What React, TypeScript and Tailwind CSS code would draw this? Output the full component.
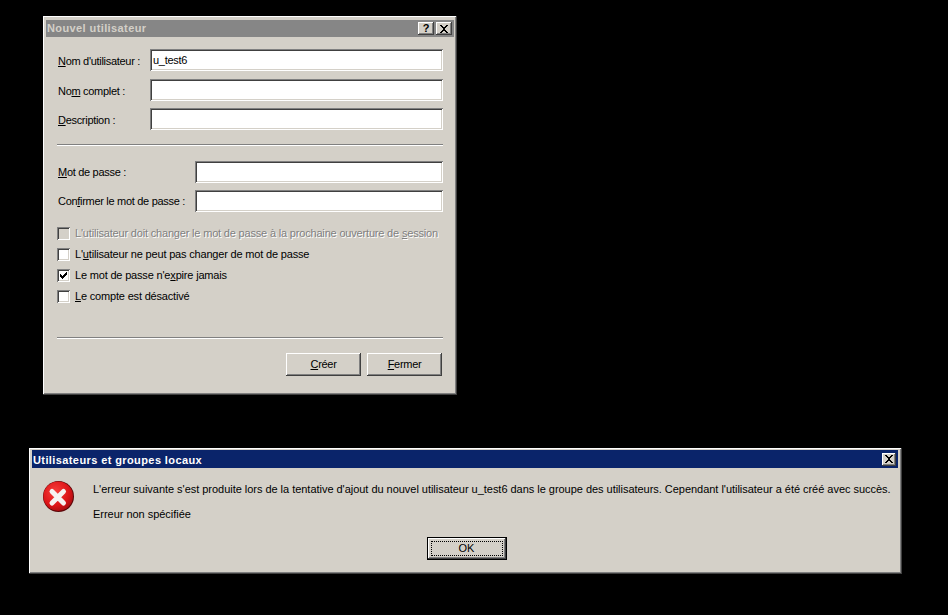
const raised = 'shadow-[inset_-1px_-1px_#404040,inset_1px_1px_#ffffff,inset_-2px_-2px_#808080,inset_2px_2px_#d4d0c8]';
const sunken = 'shadow-[inset_1px_1px_#808080,inset_-1px_-1px_#ffffff,inset_2px_2px_#404040,inset_-2px_-2px_#d4d0c8]';

function TitleButton({ children, className = '' }: { children: React.ReactNode; className?: string }) {
  return (
    <div className={`flex items-center justify-center bg-[#d4d0c8] ${raised} ${className}`}>
      {children}
    </div>
  );
}

function CloseGlyph() {
  return (
    <svg width="10" height="8" viewBox="0 0 10 8" shapeRendering="crispEdges">
      <path d="M1 0h2v1h1v1h2V1h1V0h2v1H8v1H7v1H6v2h1v1h1v1h1v1H7V7H6V6H4v1H3v1H1V7h1V6h1V5h1V3H3V2H2V1H1z" fill="#000" />
    </svg>
  );
}

function Field({ label, width, className = '', labelClass = 'pt-[2px]', value = '' }: { label: React.ReactNode; width: string; className?: string; labelClass?: string; value?: string }) {
  return (
    <div className={`flex items-center justify-between ${className}`}>
      <span className={`pl-[1px] text-[11px] tracking-[-0.3px] text-black ${labelClass}`}>{label}</span>
      <div className={`flex h-[22px] items-center bg-white pl-[3px] text-[11px] tracking-[-0.3px] text-black ${sunken} ${width}`}>{value}</div>
    </div>
  );
}

function Check({ label, checked = false, disabled = false }: { label: React.ReactNode; checked?: boolean; disabled?: boolean }) {
  return (
    <div className="flex h-[13px] items-center gap-[5px]">
      <div className={`flex h-[13px] w-[13px] items-center justify-center ${disabled ? 'bg-[#d4d0c8]' : 'bg-white'} ${sunken}`}>
        {checked && (
          <svg width="7" height="7" viewBox="0 0 7 7" shapeRendering="crispEdges">
            <path d="M6 0h1v3H6v1H5v1H4v1H3v1H2V6H1V5H0V2h1v1h1v1h1V3h1V2h1V1h1z" fill="#000" />
          </svg>
        )}
      </div>
      <span className={`whitespace-nowrap text-[11px] tracking-[-0.18px] ${disabled ? 'text-[#808080] [text-shadow:1px_1px_#ffffff]' : 'text-black'}`}>{label}</span>
    </div>
  );
}

function Separator({ className = '' }: { className?: string }) {
  return <div className={`h-[2px] border-t border-b border-t-[#808080] border-b-white ${className}`} />;
}

function DialogButton({ children }: { children: React.ReactNode }) {
  return (
    <div className={`flex h-[23px] w-[75px] items-center justify-center bg-[#d4d0c8] text-[11px] tracking-[-0.3px] text-black ${raised}`}>
      {children}
    </div>
  );
}

function ErrorIcon() {
  return (
    <svg width="31" height="31" viewBox="0 0 31 31" className="shrink-0">
      <defs>
        <radialGradient id="err" cx="40%" cy="35%" r="72%">
          <stop offset="0%" stopColor="#f8403c" />
          <stop offset="65%" stopColor="#dc1418" />
          <stop offset="100%" stopColor="#a00c10" />
        </radialGradient>
      </defs>
      <circle cx="15.5" cy="15.5" r="15.5" fill="#5a0608" />
      <circle cx="15.2" cy="15.2" r="14.8" fill="url(#err)" />
      <path d="M9 10.5 L20.5 22 M20.5 10.5 L9 22" stroke="#f6f2f2" strokeWidth="5" strokeLinecap="round" />
    </svg>
  );
}

export default function App() {
  return (
    <div className="flex h-[615px] w-[948px] flex-col overflow-hidden bg-black font-['Liberation_Sans',sans-serif]">
      {/* Nouvel utilisateur */}
      <div className={`ml-[43px] mt-[16px] h-[379px] w-[414px] shrink-0 bg-[#d4d0c8] px-[3px] pt-[4px] ${raised}`}>
        <div className="flex h-[17px] items-center justify-between bg-[#868686] pl-[1px] pr-[2px]">
          <span className="text-[11px] font-bold tracking-[0.4px] text-[#d4d0c8]">Nouvel utilisateur</span>
          <div className="flex gap-[2px]">
            <TitleButton className="h-[13px] w-[16px]">
              <span className="text-[11px] font-bold leading-none text-black">?</span>
            </TitleButton>
            <TitleButton className="h-[13px] w-[16px]">
              <CloseGlyph />
            </TitleButton>
          </div>
        </div>

        <div className="flex flex-col px-[11px] pt-[12px]">
          <Field label={<><u>N</u>om d'utilisateur :</>} width="w-[293px]" value="u_test6" />
          <Field label={<>No<u>m</u> complet :</>} width="w-[293px]" className="mt-[8px]" />
          <Field label={<><u>D</u>escription :</>} width="w-[293px]" className="mt-[7px]" />
          <Separator className="mt-[14px]" />
          <Field label={<><u>M</u>ot de passe :</>} width="w-[248px]" className="mt-[15px]" labelClass="" />
          <Field label={<>Con<u>f</u>irmer le mot de passe :</>} width="w-[248px]" className="mt-[7px]" labelClass="" />

          <div className="mt-[15px] flex flex-col gap-[8px]">
            <Check disabled label={<>L'utilisateur doit changer le mot de passe à la prochaine ouverture de <u>s</u>ession</>} />
            <Check label={<>L'<u>u</u>tilisateur ne peut pas changer de mot de passe</>} />
            <Check checked label={<>Le mot de passe n'e<u>x</u>pire jamais</>} />
            <Check label={<><u>L</u>e compte est désactivé</>} />
          </div>

          <Separator className="mt-[34px]" />
          <div className="mr-[1px] mt-[14px] flex justify-end gap-[6px]">
            <DialogButton><u>C</u>réer</DialogButton>
            <DialogButton><u>F</u>ermer</DialogButton>
          </div>
        </div>
      </div>

      {/* Utilisateurs et groupes locaux */}
      <div className={`ml-[29px] mt-[53px] h-[126px] w-[873px] shrink-0 bg-[#d4d0c8] pl-[3px] pr-[4px] pt-[2px] ${raised}`}>
        <div className="flex h-[18px] items-center justify-between bg-[#0a246a] pl-[1px] pr-[2px]">
          <span className="pt-[2px] text-[11px] font-bold tracking-[0.4px] text-white">Utilisateurs et groupes locaux</span>
          <TitleButton className="h-[13px] w-[14px]">
            <CloseGlyph />
          </TitleButton>
        </div>
        <div className="flex pl-[11px] pt-[13px]">
          <ErrorIcon />
          <div className="ml-[19px] flex flex-col text-[11px] leading-[13px] tracking-[-0.03px] text-black">
            <p className="mt-[2px] whitespace-nowrap">L'erreur suivante s'est produite lors de la tentative d'ajout du nouvel utilisateur u_test6 dans le groupe des utilisateurs. Cependant l'utilisateur a été créé avec succès.</p>
            <p className="mt-[12px]">Erreur non spécifiée</p>
          </div>
        </div>
        <div className="mt-[16px] flex justify-center pl-[3px]">
          <div className={`flex h-[23px] w-[80px] items-center justify-center border border-black bg-[#d4d0c8] text-[11px] text-black ${raised}`}>
            <div className="flex h-[15px] w-[72px] items-center justify-center border border-dotted border-black">OK</div>
          </div>
        </div>
      </div>
    </div>
  );
}
